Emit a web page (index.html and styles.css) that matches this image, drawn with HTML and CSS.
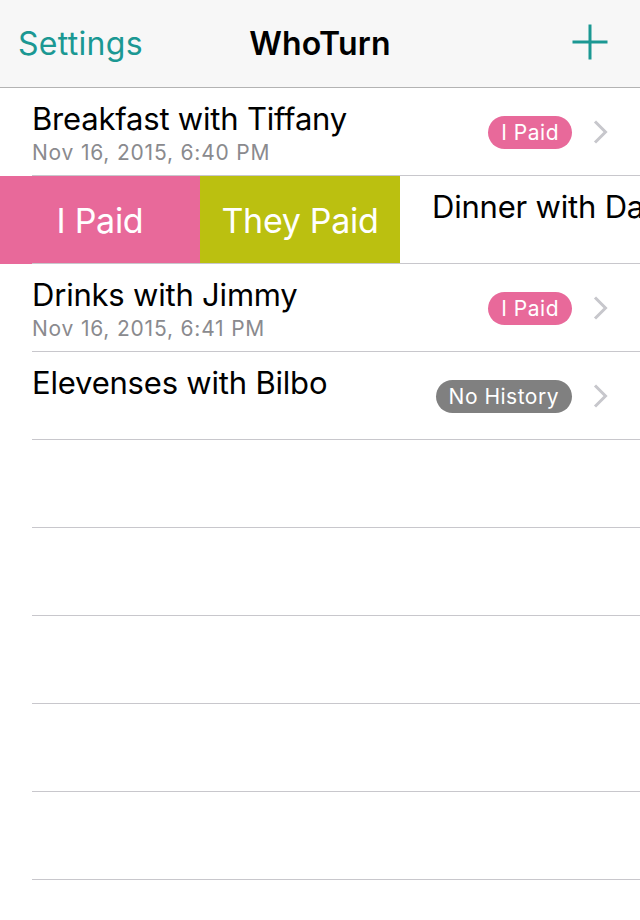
FILE: index.html
```html
<!DOCTYPE html>
<html lang="en">
<head>
<meta charset="utf-8">
<title>WhoTurn</title>
<link rel="stylesheet" href="styles.css">
</head>
<body>
<div class="screen">
  <header class="nav">
    <div class="nav-left">Settings</div>
    <div class="nav-title">WhoTurn</div>
    <div class="nav-right">
      <svg class="plus" width="36" height="36" viewBox="0 0 36 36" aria-label="Add">
        <line x1="18" y1="0.5" x2="18" y2="35.5" />
        <line x1="0.5" y1="18" x2="35.5" y2="18" />
      </svg>
    </div>
  </header>

  <ul class="list">
    <li class="row">
      <div class="cell">
        <div class="text">
          <div class="title">Breakfast with Tiffany</div>
          <div class="subtitle">Nov 16, 2015, 6:40 PM</div>
        </div>
        <span class="badge badge-pink">I Paid</span>
        <svg class="chev" width="15" height="24" viewBox="0 0 15 24"><polyline points="2,1.5 12.5,12 2,22.5" /></svg>
      </div>
    </li>

    <li class="row">
      <div class="actions">
        <div class="action action-pink">I Paid</div>
        <div class="action action-olive">They Paid</div>
      </div>
      <div class="cell">
        <div class="text">
          <div class="title">Dinner with Dave</div>
          <div class="subtitle"></div>
        </div>
      </div>
    </li>

    <li class="row">
      <div class="cell">
        <div class="text">
          <div class="title">Drinks with Jimmy</div>
          <div class="subtitle">Nov 16, 2015, 6:41 PM</div>
        </div>
        <span class="badge badge-pink">I Paid</span>
        <svg class="chev" width="15" height="24" viewBox="0 0 15 24"><polyline points="2,1.5 12.5,12 2,22.5" /></svg>
      </div>
    </li>

    <li class="row">
      <div class="cell">
        <div class="text">
          <div class="title">Elevenses with Bilbo</div>
          <div class="subtitle"></div>
        </div>
        <span class="badge badge-gray">No History</span>
        <svg class="chev" width="15" height="24" viewBox="0 0 15 24"><polyline points="2,1.5 12.5,12 2,22.5" /></svg>
      </div>
    </li>

    <li class="row"><div class="cell"></div></li>
    <li class="row"><div class="cell"></div></li>
    <li class="row"><div class="cell"></div></li>
    <li class="row"><div class="cell"></div></li>
    <li class="row"><div class="cell"></div></li>
    <li class="row"><div class="cell"></div></li>
  </ul>
</div>
</body>
</html>
```

FILE: styles.css
```css
* { box-sizing: border-box; }

html, body {
  margin: 0;
  padding: 0;
  background: #ffffff;
}

body {
  font-family: Inter, Roboto, "Liberation Sans", sans-serif;
  color: #000;
}

.screen {
  width: 640px;
  height: 920px;
  overflow: hidden;
  background: #fff;
}

.nav {
  height: 88px;
  background: #f7f7f7;
  border-bottom: 1px solid #b3b3b3;
  display: grid;
  grid-template-columns: 1fr auto 1fr;
  align-items: center;
  padding: 0 18px;
}

.nav-left {
  color: #1b9893;
  font-size: 32px;
  font-weight: 400;
  letter-spacing: 0.3px;
}

.nav-title {
  font-size: 32px;
  font-weight: 600;
  letter-spacing: 0.2px;
}

.nav-right {
  display: flex;
  justify-content: flex-end;
  padding-right: 14px;
}

.plus {
  display: block;
  margin-bottom: 4px;
}

.plus line {
  stroke: #1b9893;
  stroke-width: 3;
}

.list {
  list-style: none;
  margin: 0;
  padding: 0;
}

.row {
  height: 88px;
  display: flex;
  overflow: hidden;
  position: relative;
}

.row::after {
  content: "";
  position: absolute;
  left: 32px;
  right: 0;
  bottom: 0;
  height: 1px;
  background: #c8c7cc;
}

.cell {
  flex: 0 0 640px;
  width: 640px;
  height: 88px;
  padding: 0 32px;
  display: flex;
  align-items: center;
  background: #fff;
}

.text {
  flex: 1;
  align-self: flex-start;
  padding-top: 12px;
  min-width: 0;
  white-space: nowrap;
}

.title {
  font-size: 31px;
  line-height: 38px;
  letter-spacing: -0.2px;
}

.subtitle {
  font-size: 21px;
  line-height: 26px;
  margin-top: 2px;
  color: #8a8a8e;
  letter-spacing: 0.8px;
}

.badge {
  height: 33px;
  border-radius: 17px;
  padding: 0 13px;
  display: flex;
  align-items: center;
  color: #fff;
  font-size: 21px;
  letter-spacing: 0.5px;
  white-space: nowrap;
}

.badge-pink { background: #e8699a; }
.badge-gray { background: #808080; }

.chev {
  margin-left: 21px;
  display: block;
}

.chev polyline {
  fill: none;
  stroke: #c7c7cc;
  stroke-width: 3;
}

.actions {
  flex: 0 0 400px;
  display: flex;
  height: 88px;
}

.action {
  width: 200px;
  height: 88px;
  display: flex;
  align-items: center;
  justify-content: center;
  color: #fff;
  font-size: 34px;
  letter-spacing: -0.3px;
}

.action-pink { background: #e8699a; }
.action-olive { background: #bbc010; }
```
